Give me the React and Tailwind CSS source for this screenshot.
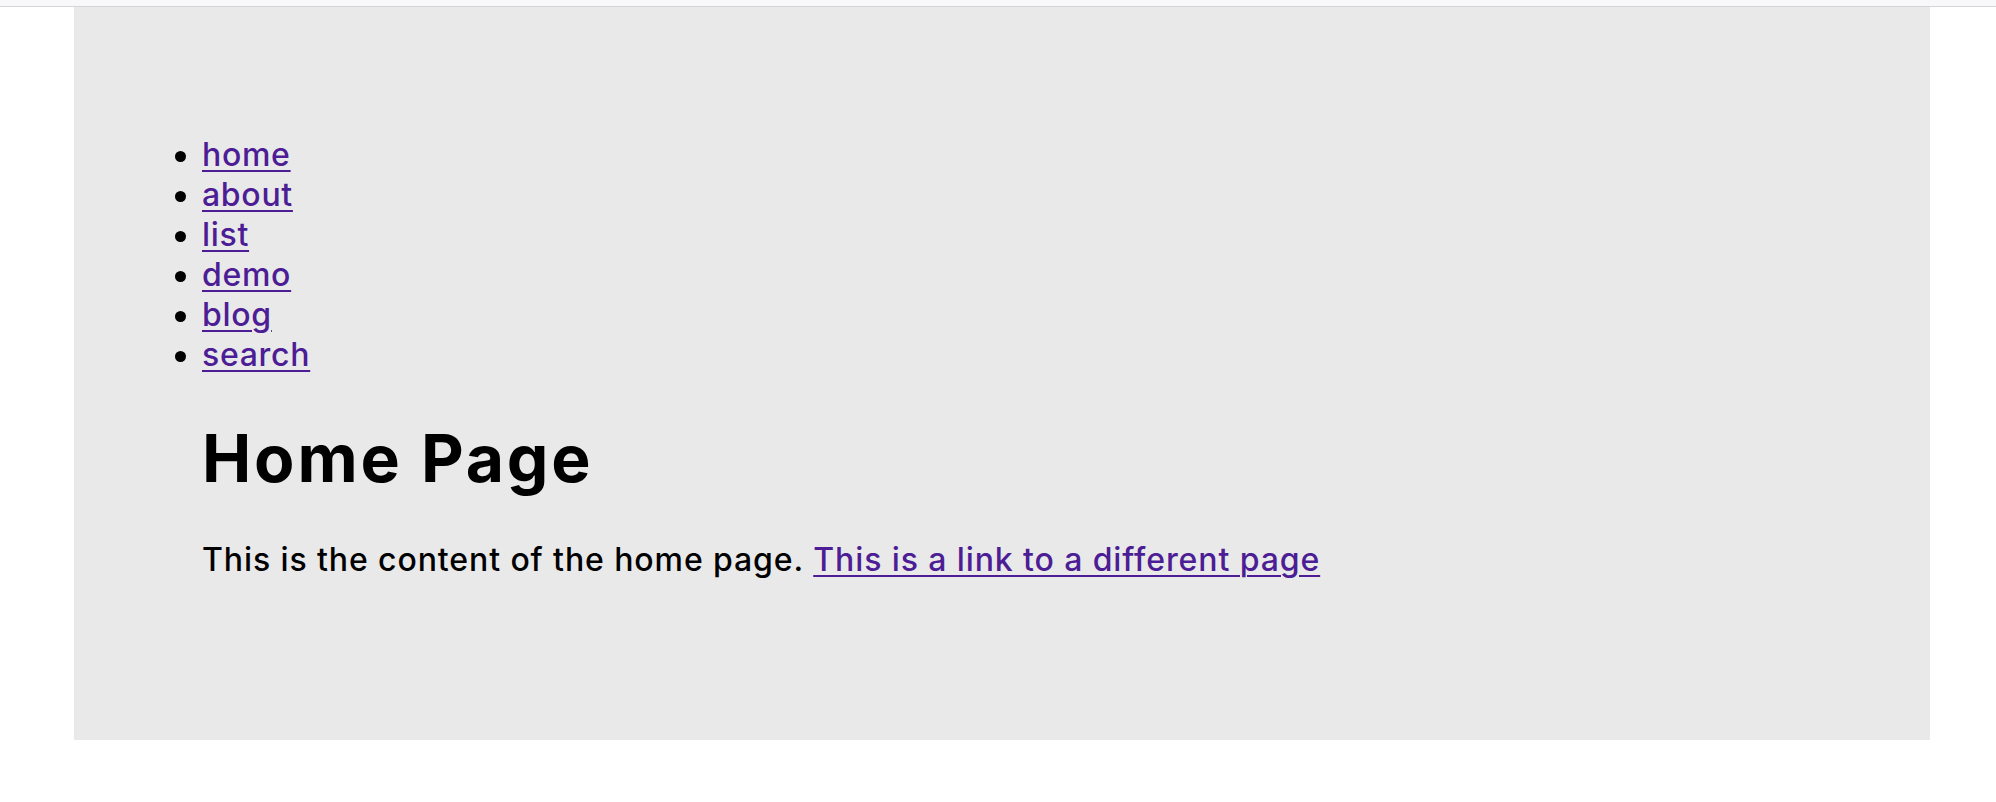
const links = ['home', 'about', 'list', 'demo', 'blog', 'search']

export default function App() {
  return (
    <div className="min-h-screen bg-white font-['Inter',sans-serif] text-black">
      <div className="h-[7px] border-b border-[#d4d4d6] bg-[#f8f8fa]" />
      <div className="ml-[74px] mr-[66px] bg-[#e9e9e9] pt-[128px] pb-[160px]">
        <ul className="list-none pl-[101px] text-[32px] leading-[40px] tracking-[0.7px] font-medium">
          {links.map((name) => (
            <li key={name} className="flex items-center gap-[16px]">
              <span className="mt-[2px] h-[11px] w-[11px] shrink-0 rounded-full bg-black" />
              <a href="#" className="text-[#4c1d95] underline decoration-2 underline-offset-[4px]">
                {name}
              </a>
            </li>
          ))}
        </ul>
        <main className="pl-[128px] pt-[42px]">
          <h1 className="text-[66px] font-bold leading-[82px] tracking-[2.8px]">Home Page</h1>
          <p className="mt-[41px] text-[32px] leading-[40px] tracking-[0.9px] font-medium">
            This is the content of the home page.{' '}
            <a href="#" className="text-[#4c1d95] underline decoration-2 underline-offset-[4px]">
              This is a link to a different page
            </a>
          </p>
        </main>
      </div>
    </div>
  )
}
